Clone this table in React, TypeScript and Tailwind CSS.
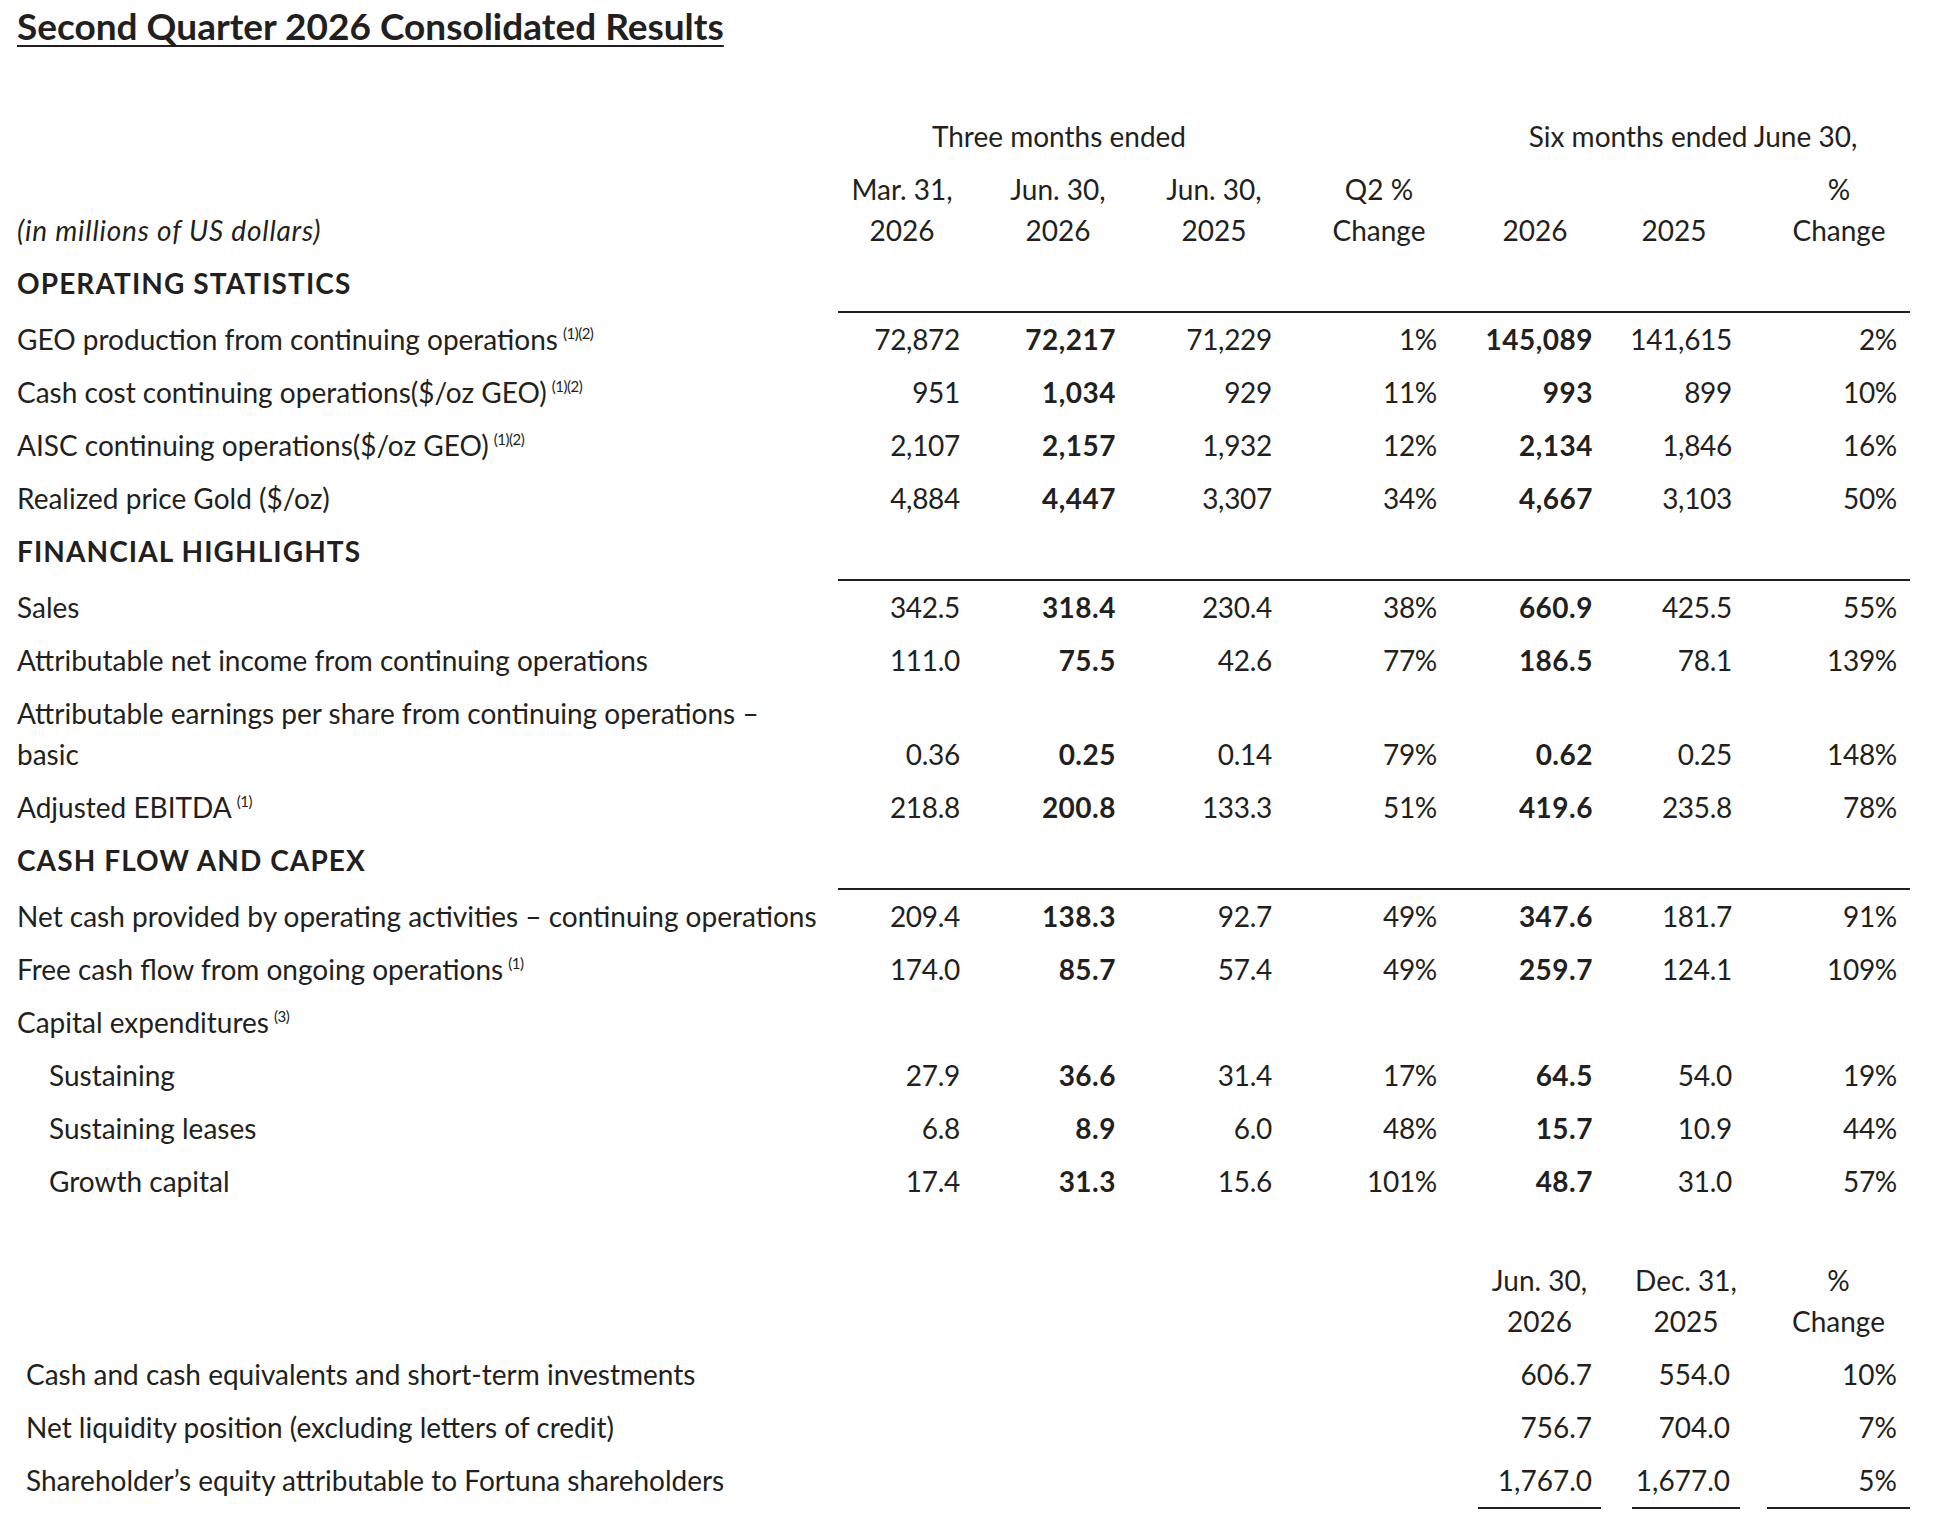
import React from "react";

type Row = {
  label: string;
  sup?: string;
  vals?: string[];
  indent?: boolean;
  twoLine?: [string, string];
};

const sections: { title: string; rows: Row[] }[] = [
  {
    title: "OPERATING STATISTICS",
    rows: [
      { label: "GEO production from continuing operations", sup: "(1)(2)", vals: ["72,872", "72,217", "71,229", "1%", "145,089", "141,615", "2%"] },
      { label: "Cash cost continuing operations($/oz GEO)", sup: "(1)(2)", vals: ["951", "1,034", "929", "11%", "993", "899", "10%"] },
      { label: "AISC continuing operations($/oz GEO)", sup: "(1)(2)", vals: ["2,107", "2,157", "1,932", "12%", "2,134", "1,846", "16%"] },
      { label: "Realized price Gold ($/oz)", vals: ["4,884", "4,447", "3,307", "34%", "4,667", "3,103", "50%"] },
    ],
  },
  {
    title: "FINANCIAL HIGHLIGHTS",
    rows: [
      { label: "Sales", vals: ["342.5", "318.4", "230.4", "38%", "660.9", "425.5", "55%"] },
      { label: "Attributable net income from continuing operations", vals: ["111.0", "75.5", "42.6", "77%", "186.5", "78.1", "139%"] },
      { label: "", twoLine: ["Attributable earnings per share from continuing operations –", "basic"], vals: ["0.36", "0.25", "0.14", "79%", "0.62", "0.25", "148%"] },
      { label: "Adjusted EBITDA", sup: "(1)", vals: ["218.8", "200.8", "133.3", "51%", "419.6", "235.8", "78%"] },
    ],
  },
  {
    title: "CASH FLOW AND CAPEX",
    rows: [
      { label: "Net cash provided by operating activities – continuing operations", vals: ["209.4", "138.3", "92.7", "49%", "347.6", "181.7", "91%"] },
      { label: "Free cash flow from ongoing operations", sup: "(1)", vals: ["174.0", "85.7", "57.4", "49%", "259.7", "124.1", "109%"] },
      { label: "Capital expenditures", sup: "(3)" },
      { label: "Sustaining", indent: true, vals: ["27.9", "36.6", "31.4", "17%", "64.5", "54.0", "19%"] },
      { label: "Sustaining leases", indent: true, vals: ["6.8", "8.9", "6.0", "48%", "15.7", "10.9", "44%"] },
      { label: "Growth capital", indent: true, vals: ["17.4", "31.3", "15.6", "101%", "48.7", "31.0", "57%"] },
    ],
  },
];

const bottomRows = [
  { label: "Cash and cash equivalents and short-term investments", vals: ["606.7", "554.0", "10%"] },
  { label: "Net liquidity position (excluding letters of credit)", vals: ["756.7", "704.0", "7%"] },
  { label: "Shareholder’s equity attributable to Fortuna shareholders", vals: ["1,767.0", "1,677.0", "5%"] },
];

function Sup({ t }: { t: string }) {
  return <sup className="text-[15px] ml-[5px] top-[-0.75em] tracking-[-0.5px]">{t}</sup>;
}

function HeadCell({ lines }: { lines: string[] }) {
  return (
    <div className="flex items-end justify-end py-[6px] leading-[41px]">
      <div className="w-[116px] text-center whitespace-nowrap">
        {lines.map((l, i) => (
          <div key={i}>{l}</div>
        ))}
      </div>
    </div>
  );
}

export default function App() {
  return (
    <div
      className="min-h-screen bg-white text-[#231f20] text-[28px]"
      style={{ fontFamily: "Lato, 'Open Sans', sans-serif" }}
    >
      <div className="pl-[17px] pt-[6px]">
        <h1 className="text-[37px] font-bold leading-[40px] underline decoration-2 underline-offset-[5px]">
          Second Quarter 2026 Consolidated Results
        </h1>
      </div>

      <div className="pl-[17px] mt-[64px] grid grid-cols-[821px_122px_156px_156px_165px_156px_139px_165px_13px]">
        {/* header row 1 */}
        <div />
        <div className="col-span-3 text-center pl-[8px] py-[6px] leading-[41px]">Three months ended</div>
        <div />
        <div className="col-span-3 text-center pl-[52px] py-[6px] leading-[41px] whitespace-nowrap">Six months ended June 30,</div>
        <div />

        {/* header row 2 */}
        <div className="flex items-end py-[6px] leading-[41px] italic tracking-[0.8px]">(in millions of US dollars)</div>
        <HeadCell lines={["Mar. 31,", "2026"]} />
        <HeadCell lines={["Jun. 30,", "2026"]} />
        <HeadCell lines={["Jun. 30,", "2025"]} />
        <HeadCell lines={["Q2 %", "Change"]} />
        <HeadCell lines={["2026"]} />
        <HeadCell lines={["2025"]} />
        <HeadCell lines={["%", "Change"]} />
        <div />

        {sections.map((s) => (
          <React.Fragment key={s.title}>
            <div className="font-bold pt-[6px] pb-[9px] leading-[41px] tracking-[1.1px] whitespace-nowrap">{s.title}</div>
            <div className="col-span-8 border-b-2 border-[#231f20]" />
            {s.rows.map((r, ri) => (
              <React.Fragment key={ri}>
                <div className={`py-[6px] leading-[41px] whitespace-nowrap ${r.indent ? "pl-[32px]" : ""}`}>
                  {r.twoLine ? (
                    <>
                      <div>{r.twoLine[0]}</div>
                      <div>{r.twoLine[1]}</div>
                    </>
                  ) : (
                    <>
                      {r.label}
                      {r.sup && <Sup t={r.sup} />}
                    </>
                  )}
                </div>
                {Array.from({ length: 7 }).map((_, ci) => (
                  <div
                    key={ci}
                    className={`flex items-end justify-end py-[6px] leading-[41px] ${
                      ci === 1 || ci === 4 ? "font-bold tracking-[0.5px]" : "tracking-[-0.3px]"
                    }`}
                  >
                    {r.vals ? r.vals[ci] : ""}
                  </div>
                ))}
                <div />
              </React.Fragment>
            ))}
          </React.Fragment>
        ))}
      </div>

      <div className="pl-[26px] mt-[46px] grid grid-cols-[1452px_123px_31px_108px_27px_143px]">
        <div />
        <div className="text-center py-[6px] leading-[41px]">
          <div>Jun. 30,</div>
          <div>2026</div>
        </div>
        <div />
        <div className="text-center py-[6px] leading-[41px]">
          <div>Dec. 31,</div>
          <div>2025</div>
        </div>
        <div />
        <div className="text-center py-[6px] leading-[41px]">
          <div>%</div>
          <div>Change</div>
        </div>

        {bottomRows.map((r, ri) => {
          const last = ri === bottomRows.length - 1;
          const b = last ? "border-b-2 border-[#231f20]" : "";
          return (
            <React.Fragment key={ri}>
              <div className="py-[6px] leading-[41px] whitespace-nowrap">{r.label}</div>
              <div className={`text-right pr-[9px] py-[6px] leading-[41px] ${b}`}>{r.vals[0]}</div>
              <div />
              <div className={`text-right pr-[10px] py-[6px] leading-[41px] ${b}`}>{r.vals[1]}</div>
              <div />
              <div className={`text-right pr-[13px] py-[6px] leading-[41px] ${b}`}>{r.vals[2]}</div>
            </React.Fragment>
          );
        })}
      </div>
    </div>
  );
}
